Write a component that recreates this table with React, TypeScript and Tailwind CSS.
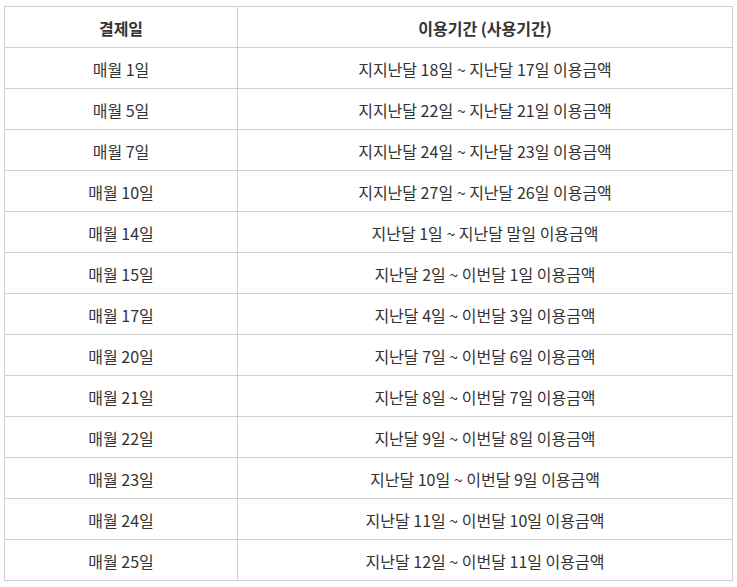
const rows: [string, string][] = [
  ["매월 1일", "지지난달 18일 ~ 지난달 17일 이용금액"],
  ["매월 5일", "지지난달 22일 ~ 지난달 21일 이용금액"],
  ["매월 7일", "지지난달 24일 ~ 지난달 23일 이용금액"],
  ["매월 10일", "지지난달 27일 ~ 지난달 26일 이용금액"],
  ["매월 14일", "지난달 1일 ~ 지난달 말일 이용금액"],
  ["매월 15일", "지난달 2일 ~ 이번달 1일 이용금액"],
  ["매월 17일", "지난달 4일 ~ 이번달 3일 이용금액"],
  ["매월 20일", "지난달 7일 ~ 이번달 6일 이용금액"],
  ["매월 21일", "지난달 8일 ~ 이번달 7일 이용금액"],
  ["매월 22일", "지난달 9일 ~ 이번달 8일 이용금액"],
  ["매월 23일", "지난달 10일 ~ 이번달 9일 이용금액"],
  ["매월 24일", "지난달 11일 ~ 이번달 10일 이용금액"],
  ["매월 25일", "지난달 12일 ~ 이번달 11일 이용금액"],
];

export default function App() {
  return (
    <div className="min-h-screen bg-white pl-[4px] pt-[6px] font-['Noto_Sans_CJK_KR',sans-serif] text-[16px] text-[#333]">
      <table className="w-[729px] border-collapse border border-[#d0d0d0] text-center">
        <thead>
          <tr className="h-[41px]">
            <th className="w-[233px] border border-[#d0d0d0] pt-[2px] font-bold">결제일</th>
            <th className="border border-[#d0d0d0] pt-[2px] font-bold">이용기간 (사용기간)</th>
          </tr>
        </thead>
        <tbody>
          {rows.map(([day, period]) => (
            <tr key={day} className="h-[41px]">
              <td className="border border-[#d0d0d0] pt-[2px]">{day}</td>
              <td className="border border-[#d0d0d0] pt-[2px]">{period}</td>
            </tr>
          ))}
        </tbody>
      </table>
    </div>
  );
}
